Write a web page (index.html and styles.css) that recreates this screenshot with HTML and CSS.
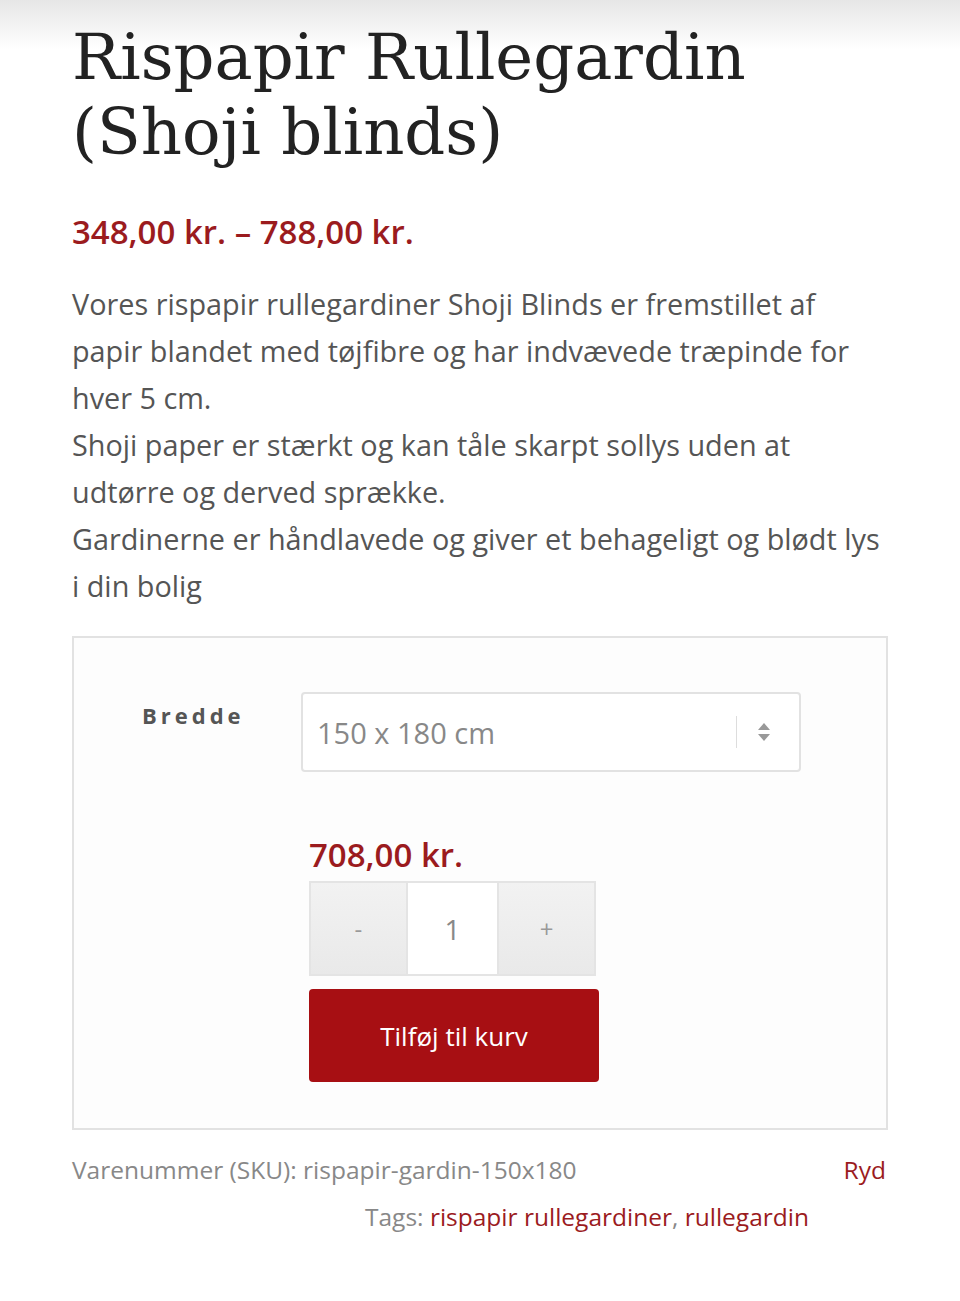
FILE: index.html
```html
<!DOCTYPE html>
<html lang="da">
<head>
    <meta charset="UTF-8">
    <meta name="viewport" content="width=device-width, initial-scale=1.0">
    <title>Rispapir Rullegardin (Shoji blinds)</title>
    <link rel="stylesheet" href="styles.css">
</head>
<body>
    <div class="top-shade"></div>
    <div class="product">
        <h1 class="product-title">Rispapir Rullegardin (Shoji blinds)</h1>
        <p class="price-range">348,00 kr. – 788,00 kr.</p>
        <div class="description">
            <p>Vores rispapir rullegardiner Shoji Blinds er fremstillet af papir blandet med tøjfibre og har indvævede træpinde for hver 5 cm.<br>
            Shoji paper er stærkt og kan tåle skarpt sollys uden at udtørre og derved sprække.<br>
            Gardinerne er håndlavede og giver et behageligt og blødt lys i din bolig</p>
        </div>

        <form class="cart-box">
            <div class="variation-row">
                <label class="variation-label">Bredde</label>
                <div class="select-box">
                    <span class="select-value">150 x 180 cm</span>
                    <span class="select-divider"></span>
                    <svg class="select-arrows" width="14" height="22" viewBox="0 0 14 22">
                        <path d="M7 2 L13 9 H1 Z" fill="#999"/>
                        <path d="M7 20 L13 13 H1 Z" fill="#999"/>
                    </svg>
                </div>
            </div>
            <div class="single-variation">
                <p class="variation-price">708,00 kr.</p>
                <div class="quantity">
                    <button type="button" class="qty-btn">-</button>
                    <span class="qty-input">1</span>
                    <button type="button" class="qty-btn">+</button>
                </div>
                <button type="button" class="add-to-cart">Tilføj til kurv</button>
            </div>
        </form>

        <div class="meta-row">
            <span class="sku">Varenummer (SKU): rispapir-gardin-150x180</span>
            <a href="#" class="reset-link">Ryd</a>
        </div>
        <div class="tags">Tags: <a href="#">rispapir rullegardiner</a>, <a href="#">rullegardin</a></div>
    </div>
</body>
</html>
```

FILE: styles.css
```css
body {
    font-family: 'Open Sans', sans-serif;
    background-color: #fff;
    color: #555;
    margin: 0;
    padding: 0;
}
.top-shade {
    height: 50px;
    background: linear-gradient(#e6e6e6, #fff);
    margin-bottom: -50px;
}
.product {
    padding: 20px 72px 0 72px;
}
.product-title {
    font-family: 'DejaVu Serif', serif;
    font-weight: 400;
    font-size: 64px;
    line-height: 75px;
    color: #222;
    margin: 0;
}
.price-range {
    color: #9b1b1e;
    font-size: 33px;
    font-weight: 600;
    margin: 42px 0 0 0;
    line-height: 40px;
}
.description p {
    font-size: 28.8px;
    line-height: 47px;
    margin: 28px 0 0 0;
}
.cart-box {
    margin-top: 27px;
    border: 2px solid #e2e2e2;
    background-color: #fdfdfd;
    padding: 54px 0 46px 0;
}
.variation-row {
    display: flex;
    align-items: flex-start;
}
.variation-label {
    width: 159px;
    padding-left: 68px;
    padding-top: 8px;
    font-size: 22px;
    font-weight: 700;
    letter-spacing: 4px;
    color: #555;
}
.select-box {
    width: 500px;
    height: 80px;
    border: 2px solid #e2e2e2;
    border-radius: 4px;
    background-color: #fff;
    display: flex;
    align-items: center;
    padding: 0 14px;
    box-sizing: border-box;
}
.select-value {
    flex: 1;
    font-size: 29px;
    color: #888;
}
.select-divider {
    width: 1px;
    height: 32px;
    background-color: #ddd;
    margin-right: 20px;
}
.select-arrows {
    margin-right: 14px;
}
.single-variation {
    padding-left: 235px;
    margin-top: 63px;
}
.variation-price {
    color: #9b1b1e;
    font-size: 33px;
    font-weight: 600;
    line-height: 40px;
    margin: 0 0 6px 0;
}
.quantity {
    display: flex;
    width: 287px;
    height: 95px;
    border: 2px solid #e4e4e4;
    box-sizing: border-box;
}
.qty-btn {
    width: 96px;
    border: none;
    background: linear-gradient(#f2f2f2, #e9e9e9);
    font-family: 'Open Sans', sans-serif;
    font-size: 24px;
    color: #999;
}
.qty-input {
    width: 91px;
    background-color: #fff;
    border-left: 2px solid #e4e4e4;
    border-right: 2px solid #e4e4e4;
    display: flex;
    align-items: center;
    justify-content: center;
    font-size: 28px;
    color: #888;
}
.add-to-cart {
    margin-top: 13px;
    width: 290px;
    height: 93px;
    border: none;
    border-radius: 4px;
    background-color: #a70f13;
    color: #fff;
    font-family: 'Open Sans', sans-serif;
    font-size: 26px;
}
.meta-row {
    display: flex;
    justify-content: space-between;
    margin-top: 20px;
    font-size: 24.5px;
    line-height: 40px;
}
.sku {
    color: #888;
}
.reset-link {
    color: #9b1b1e;
    text-decoration: none;
    margin-right: 2px;
}
.tags {
    font-size: 24.5px;
    line-height: 40px;
    color: #888;
    margin: 7px 0 0 293px;
}
.tags a {
    color: #9b1b1e;
    text-decoration: none;
}
```
